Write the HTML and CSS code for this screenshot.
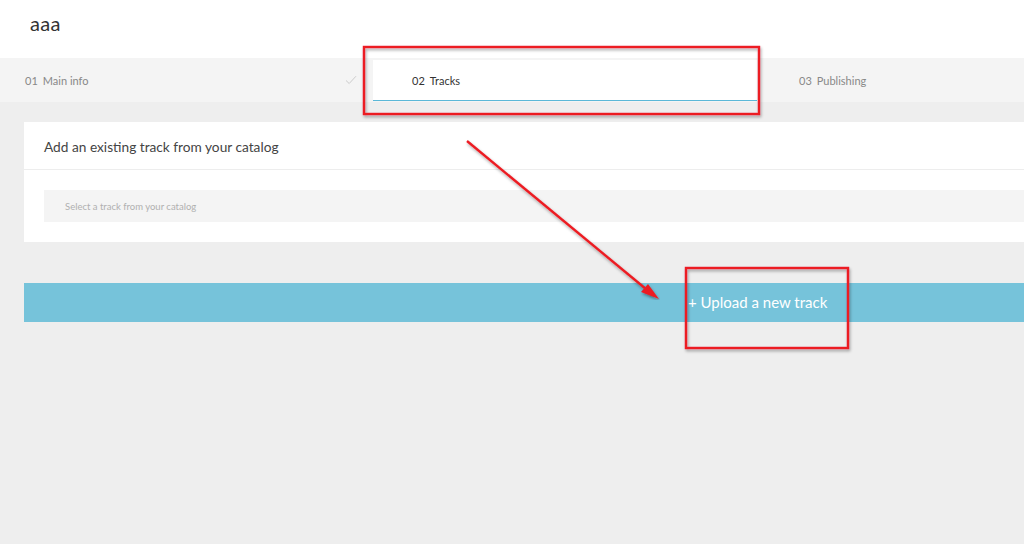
FILE: index.html
```html
<!DOCTYPE html>
<html lang="en">
<head>
    <meta charset="UTF-8">
    <title>New release - Tracks</title>
    <link rel="stylesheet" href="styles.css">
</head>
<body>
    <div class="page">
        <header class="header">
            <h1 class="release-title">aaa</h1>
        </header>

        <nav class="steps">
            <div class="step done">
                <span class="step-num">01</span> Main info
                <svg class="step-check" width="12" height="10" viewBox="0 0 12 10"><path d="M1 5.5 L4.2 8.5 L11 1.2" fill="none" stroke="#ccc" stroke-width="1"/></svg>
            </div>
            <div class="step active">
                <span class="step-num">02</span> Tracks
            </div>
            <div class="step">
                <span class="step-num">03</span> Publishing
            </div>
        </nav>

        <main class="content">
            <section class="card">
                <h2 class="card-title">Add an existing track from your catalog</h2>
                <div class="card-body">
                    <div class="select">Select a track from your catalog</div>
                </div>
            </section>

            <button class="upload-btn">+ Upload a new track</button>
        </main>
    </div>

    <!-- annotation overlay -->
    <svg class="annotations" width="1024" height="544" viewBox="0 0 1024 544">
        <defs>
            <filter id="shadow" x="-5%" y="-5%" width="110%" height="110%">
                <feDropShadow dx="1" dy="2" stdDeviation="1.5" flood-color="#000" flood-opacity="0.35"/>
            </filter>
        </defs>
        <g filter="url(#shadow)" fill="none" stroke="#ec1c24" stroke-width="2.4">
            <rect x="364" y="47" width="395" height="67"/>
            <rect x="686" y="268" width="162" height="80"/>
            <line x1="467" y1="141" x2="652" y2="294"/>
        </g>
        <path filter="url(#shadow)" d="M659 299 L641 292 L648 284 Z" fill="#ec1c24"/>
    </svg>
</body>
</html>
```

FILE: styles.css
```css
html, body {
    margin: 0;
    padding: 0;
    overflow: hidden;
}
body {
    font-family: Lato, "Open Sans", sans-serif;
    background: #eeeeee;
    color: #444;
    width: 1024px;
    height: 544px;
}
.header {
    background: #fff;
    height: 58px;
    padding: 0 30px;
    display: flex;
    align-items: center;
}
.release-title {
    margin: 0;
    font-weight: 400;
    font-size: 20px;
    color: #333;
    position: relative;
    top: -6px;
    letter-spacing: 0.3px;
}
.steps {
    display: flex;
    background: #f4f4f4;
    height: 44px;
}
.step {
    width: 348px;
    padding-left: 25px;
    display: flex;
    align-items: center;
    font-size: 11px;
    color: #888;
    position: relative;
}
.step-num {
    margin-right: 5px;
}
.step-check {
    position: absolute;
    right: 16px;
    top: 17px;
}
.step.active {
    width: 345px;
    padding-left: 39px;
    background: #fff;
    color: #333;
    margin-top: 2px;
    height: 40px;
    border-bottom: 1px solid #5bb8d8;
}
.step.active + .step {
    flex: 1;
    padding-left: 38px;
    margin-left: 4px;
}
.content {
    padding: 20px 0 0 24px;
}
.card {
    background: #fff;
    height: 120px;
}
.card-title {
    margin: 0;
    font-size: 13.7px;
    font-weight: 400;
    color: #444;
    padding: 16px 20px 14px;
    border-bottom: 1px solid #ededed;
}
.card-body {
    padding: 20px 0 0 20px;
}
.select {
    background: #f4f4f4;
    height: 32px;
    line-height: 33px;
    padding-left: 21px;
    font-size: 9.5px;
    color: #b0b0b0;
}
.upload-btn {
    display: block;
    margin-top: 41px;
    width: 100%;
    height: 39px;
    border: none;
    background: #76c3da;
    color: #fff;
    font-family: Lato, "Open Sans", sans-serif;
    font-size: 15px;
    text-align: left;
    padding: 0 0 0 664px;
    line-height: 39px;
}
.annotations {
    position: absolute;
    left: 0;
    top: 0;
    pointer-events: none;
}
```
